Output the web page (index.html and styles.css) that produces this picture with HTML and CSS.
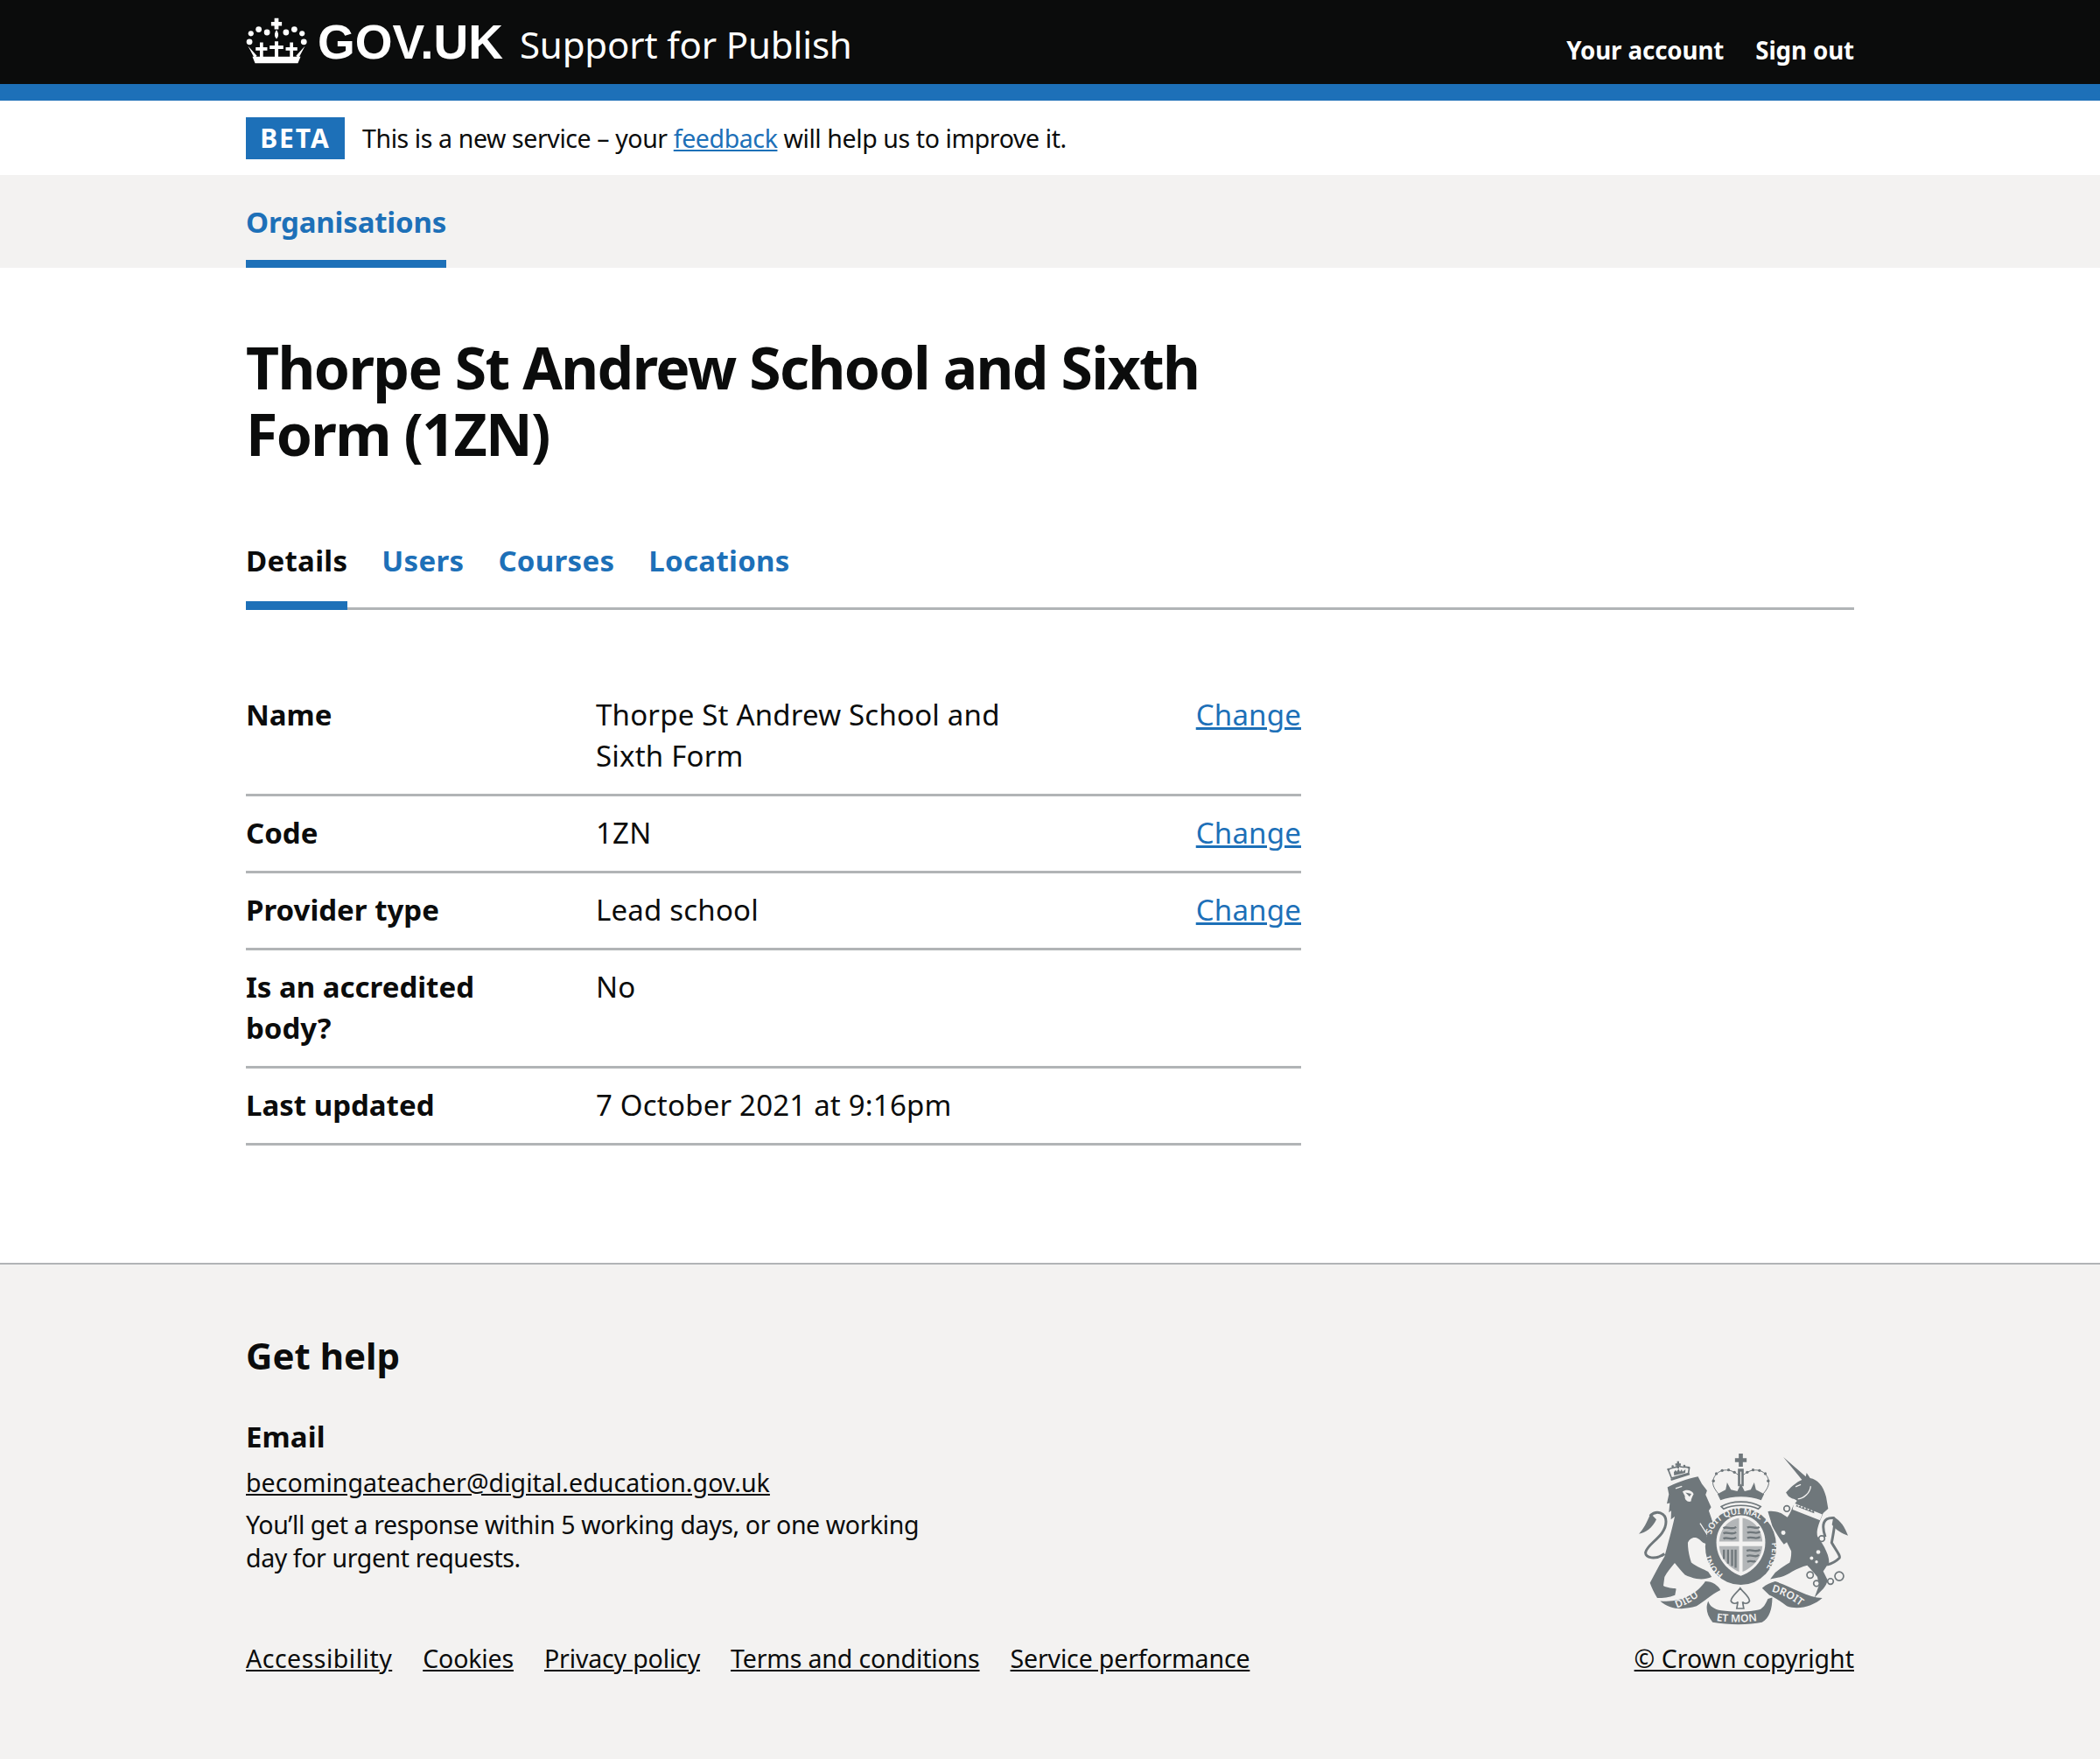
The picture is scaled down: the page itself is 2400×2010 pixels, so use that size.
FILE: index.html
```html
<!DOCTYPE html>
<html lang="en-GB">
<head>
    <meta charset="UTF-8">
    <title>Thorpe St Andrew School and Sixth Form (1ZN) - Support for Publish</title>
    <link rel="stylesheet" href="styles.css">
</head>
<body>
    <header class="site-header">
        <div class="wrapper header-inner">
            <a class="logo" href="#">
                <svg class="logo-crown" viewBox="34 28 204 156" aria-hidden="true">
                    <circle cx="45" cy="110" r="10"/><circle cx="50" cy="82" r="9"/><circle cx="76" cy="68" r="10"/><circle cx="104" cy="78" r="10"/>
                    <circle cx="168" cy="78" r="10"/><circle cx="196" cy="68" r="10"/><circle cx="222" cy="82" r="9"/><circle cx="228" cy="110" r="10"/>
                    <path d="M129 30h14v13h11v13h-11v12h-14v-12h-11v-13h11z"/>
                    <path d="M136 70c8 10 8 22 0 30c-8-8-8-20 0-30z"/>
                    <path d="M80 112h11v16h14v11h-14v24h-11v-24h-14v-11h14z"/>
                    <path d="M130 108h12v14h17v12h-17v30h-12v-30h-17v-12h17z"/>
                    <path d="M181 112h11v16h14v11h-14v24h-11v-24h-14v-11h14z"/>
                    <path d="M40 124l30 33-8 8zM232 124l-30 33 8 8z"/>
                    <path d="M55 160H217L208 182H64z"/>
                </svg>
                <span class="logo-text">GOV.UK</span>
                <span class="service-name">Support for Publish</span>
            </a>
            <nav class="header-nav">
                <a href="#">Your account</a>
                <a href="#">Sign out</a>
            </nav>
        </div>
    </header>
    <div class="header-stripe"></div>

    <div class="wrapper phase-banner">
        <strong class="phase-tag">BETA</strong>
        <span>This is a new service – your <a href="#">feedback</a> will help us to improve it.</span>
    </div>

    <nav class="primary-nav">
        <div class="wrapper">
            <a class="primary-link" href="#">Organisations</a>
        </div>
    </nav>

    <main class="wrapper main">
        <h1 class="title">Thorpe St Andrew School and Sixth Form (1ZN)</h1>

        <nav class="sub-nav">
            <a class="sub-link current" href="#">Details</a>
            <a class="sub-link" href="#">Users</a>
            <a class="sub-link" href="#">Courses</a>
            <a class="sub-link" href="#">Locations</a>
        </nav>

        <dl class="summary">
            <div class="summary-row">
                <dt>Name</dt>
                <dd>Thorpe St Andrew School and Sixth Form</dd>
                <dd class="summary-action"><a href="#">Change</a></dd>
            </div>
            <div class="summary-row">
                <dt>Code</dt>
                <dd>1ZN</dd>
                <dd class="summary-action"><a href="#">Change</a></dd>
            </div>
            <div class="summary-row">
                <dt>Provider type</dt>
                <dd>Lead school</dd>
                <dd class="summary-action"><a href="#">Change</a></dd>
            </div>
            <div class="summary-row">
                <dt>Is an accredited body?</dt>
                <dd>No</dd>
                <dd class="summary-action"></dd>
            </div>
            <div class="summary-row">
                <dt>Last updated</dt>
                <dd>7 October 2021 at 9:16pm</dd>
                <dd class="summary-action"></dd>
            </div>
        </dl>
    </main>

    <footer class="site-footer">
        <div class="wrapper footer-inner">
            <div class="footer-left">
                <h2 class="help-title">Get help</h2>
                <h3 class="help-sub">Email</h3>
                <p class="help-text"><a href="#">becomingateacher@digital.education.gov.uk</a></p>
                <p class="help-text help-note">You’ll get a response within 5 working days, or one working day for urgent requests.</p>
                <ul class="footer-links">
                    <li><a href="#">Accessibility</a></li>
                    <li><a href="#">Cookies</a></li>
                    <li><a href="#">Privacy policy</a></li>
                    <li><a href="#">Terms and conditions</a></li>
                    <li><a href="#">Service performance</a></li>
                </ul>
            </div>
            <div class="copyright">
                <svg class="crest" viewBox="100 60 725 595" aria-hidden="true">
                    <!-- lion -->
                    <path d="M200 182C220 170 270 152 305 145L318 170L336 193L331 207L350 250L342 262L355 300C347 328 338 340 335 352L358 385L322 372C315 365 308 358 300 355C285 352 275 360 270 372C270 395 275 420 282 440C300 455 325 462 340 472L352 490C335 498 315 498 300 496C285 492 272 488 260 482C248 470 235 455 225 442C212 458 198 475 190 490L186 520C200 528 218 528 230 530L226 552C205 560 185 562 165 562C155 545 145 525 140 510C150 490 162 470 172 450L190 420C200 380 215 330 225 282L212 292L213 262L205 268L208 236L198 238L205 206z"/>
                    <path class="line" d="M190 410C160 432 122 425 125 405C130 375 195 350 195 300C195 268 162 258 140 280"/>
                    <path d="M142 272C128 305 118 325 102 342C125 337 148 322 162 292z"/>
                    <path class="cut-line" d="M228 186L250 178M312 305L352 368"/>
                    <path class="spots-fill" d="M252 197C264 187 285 192 290 205C285 215 281 222 281 230C270 234 258 226 260 212z"/>
                    <path d="M262 200L282 204L276 214z"/>
                    <!-- lion crown -->
                    <path class="thin" d="M214 150L272 134L275 115C262 108 250 118 238 108C225 118 212 112 203 122z"/>
                    <path class="line-band" d="M212 156L276 136"/>
                    <g>
                        <circle cx="203" cy="120" r="4"/><circle cx="218" cy="110" r="4"/><circle cx="258" cy="108" r="4"/><circle cx="273" cy="114" r="4"/>
                    </g>
                    <path d="M233 92h7v8h6v7h-6v10h-7v-10h-6v-7h6z"/>
                    <path d="M222 130l6-8 4 6 6-10 5 10 6-8 3 8 10-8-1 12-38 9z"/>
                    <!-- unicorn -->
                    <path d="M598 78L675 145L678 132L690 150C715 155 735 175 745 215L752 255L735 270L726 292C715 320 712 335 715 350C725 365 738 382 745 400C752 415 755 428 755 440L735 470L750 500C748 512 742 522 735 530L705 560L720 520L715 490C705 478 692 462 680 450C662 455 645 462 630 470C615 480 602 486 590 490L553 497L570 475C585 462 603 450 620 440C624 428 626 412 625 400L610 370L600 378C585 358 570 335 560 315L545 265C560 262 575 266 590 270L612 285C620 275 625 262 632 245L645 228C635 220 625 222 615 212L607 200C620 185 640 165 662 156z"/>
                    <path class="line" d="M742 352C728 310 735 285 770 287C780 288 770 340 764 372C780 400 796 418 790 425C775 440 760 445 748 448"/>
                    <path d="M770 283C795 295 810 320 820 348C800 340 780 330 765 310z"/>
                    <path class="cut-line" d="M648 222C670 220 690 200 692 178M640 180L658 172"/>
                    <path class="spots-fill" d="M634 236L732 275L724 295L630 258z"/>
                    <path d="M640 248l6-8 3 9 8-6 3 10 8-6 3 10 9-6 2 10 9-6 3 10 9-5 1 11-62-24z"/>
                    <g class="rings">
                        <circle cx="690" cy="483" r="11"/><circle cx="712" cy="512" r="10"/><circle cx="760" cy="505" r="10"/><circle cx="790" cy="487" r="15"/>
                        <circle cx="730" cy="358" r="10"/><circle cx="610" cy="255" r="10"/><circle cx="598" cy="338" r="10"/>
                    </g>
                    <g class="spots">
                        <circle cx="718" cy="404" r="7"/><circle cx="695" cy="425" r="6"/><circle cx="712" cy="438" r="5"/>
                    </g>
                    <!-- royal crown -->
                    <path d="M445 66h14v16h13v13h-13v16h-14v-16h-13v-13h13z"/>
                    <path d="M442 118h20v60h-20z"/>
                    <path class="gap" d="M452 128V176"/>
                    <path class="line-thin" d="M444 140C410 110 365 120 356 160C354 180 368 195 378 208M460 140C494 110 540 120 548 160C550 180 536 195 526 208"/>
                    <g class="dots">
                        <circle cx="358" cy="160" r="5"/><circle cx="368" cy="135" r="5"/><circle cx="388" cy="124" r="5"/><circle cx="410" cy="122" r="5"/><circle cx="430" cy="130" r="5"/>
                        <circle cx="474" cy="130" r="5"/><circle cx="494" cy="122" r="5"/><circle cx="516" cy="124" r="5"/><circle cx="536" cy="135" r="5"/><circle cx="546" cy="160" r="5"/>
                    </g>
                    <path d="M372 205L400 190L405 165L418 190L440 195L452 170L465 195L486 190L498 165L504 190L532 205L522 226C480 210 425 210 382 226z"/>
                    <path class="thin" d="M385 248C420 226 485 226 520 248L512 256C480 240 425 240 393 256z"/>
                    <!-- garter and shield -->
                    <ellipse cx="452" cy="385" rx="122" ry="132"/>
                    <path class="shield" d="M368 370C368 318 408 278 452 278C496 278 536 318 536 370C536 432 492 472 452 486C412 472 368 432 368 370z"/>
                    <path class="quarter" d="M378 368C380 325 410 292 446 288V368z"/>
                    <path class="quarter" d="M458 288C494 292 524 325 526 368H458z"/>
                    <path class="quarter" d="M378 384H446V472C412 458 380 425 378 384z"/>
                    <path class="quarter" d="M458 384H526C524 425 492 458 458 472z"/>
                    <path class="heraldry" d="M392 322C405 314 420 330 436 318M392 340C405 332 420 348 436 336M392 358C405 350 420 366 436 354M474 320C488 312 504 328 516 318M474 338C488 330 504 346 518 334M474 356C488 348 504 364 518 352M472 400C488 392 504 408 518 396M472 418C488 410 504 426 514 414M474 438C488 430 496 442 502 434M394 396V428M408 396V444M422 396V452M434 396V458"/>
                    <defs>
                        <path id="garter-top" d="M350 345C375 250 530 250 555 345"/>
                        <path id="garter-left" d="M392 480C362 462 343 425 345 382"/>
                        <path id="garter-right" d="M558 372C564 415 547 462 514 488"/>
                        <path id="ribbon-left" d="M232 597C265 587 300 562 332 540"/>
                        <path id="ribbon-mid" d="M368 640C415 647 490 647 535 635"/>
                        <path id="ribbon-right" d="M557 540C600 550 640 575 672 602"/>
                    </defs>
                    <g class="crest-text">
                        <text font-size="30"><textPath href="#garter-top">SOIT QUI MAL Y</textPath></text>
                        <text font-size="30"><textPath href="#garter-left">HONI</textPath></text>
                        <text font-size="30"><textPath href="#garter-right">PENSE</textPath></text>
                    </g>
                    <!-- motto -->
                    <path d="M175 572C240 580 300 550 330 505C355 505 375 520 382 535C350 550 325 575 300 590C250 605 205 600 175 572z"/>
                    <path d="M340 572C345 590 360 600 385 605C430 612 490 610 520 600C535 590 540 575 545 565L560 560C560 600 550 630 525 645C480 655 410 655 355 645C335 620 330 595 340 572z"/>
                    <path d="M525 528C540 515 555 510 570 505C620 520 680 560 732 562C700 590 650 605 610 590C590 575 570 560 550 552z"/>
                    <path class="thin" d="M450 528C462 545 480 555 482 572C476 584 462 582 458 575L462 598H438L442 575C438 582 424 584 418 572C420 555 438 545 450 528z"/>
                    <g class="crest-text">
                        <text font-size="36"><textPath href="#ribbon-left">DIEU</textPath></text>
                        <text font-size="36"><textPath href="#ribbon-mid">ET MON</textPath></text>
                        <text font-size="36"><textPath href="#ribbon-right">DROIT</textPath></text>
                    </g>
                </svg>
                <a href="#">© Crown copyright</a>
            </div>
        </div>
    </footer>
</body>
</html>
```

FILE: styles.css
```css
* {
    box-sizing: border-box;
}
body {
    margin: 0;
    font-family: "Noto Sans", "Liberation Sans", sans-serif;
    font-size: 33px;
    line-height: 47px;
    letter-spacing: 0.2px;
    color: #0b0c0c;
    background-color: #fff;
}
a {
    color: #1d70b8;
}
.wrapper {
    width: 1838px;
    margin: 0 auto;
}

/* header */
.site-header {
    height: 96px;
    background-color: #0b0c0c;
}
.header-inner {
    display: flex;
    justify-content: space-between;
    height: 100%;
}
.logo {
    display: flex;
    align-items: center;
    height: 96px;
    color: #fff;
    text-decoration: none;
}
.logo-crown {
    width: 70px;
    height: 53px;
    margin-right: 12px;
    margin-bottom: 4px;
    fill: #fff;
}
.logo-text {
    font-family: "Liberation Sans", sans-serif;
    font-size: 55px;
    font-weight: 700;
    letter-spacing: 0;
    margin-right: 19px;
}
.service-name {
    font-size: 42px;
    font-weight: 400;
    letter-spacing: -0.15px;
    margin-top: 5px;
}
.header-nav {
    display: flex;
    gap: 36px;
    padding-top: 35px;
}
.header-nav a {
    color: #fff;
    font-size: 27.7px;
    font-weight: 700;
    line-height: 45px;
    letter-spacing: -0.1px;
    text-decoration: none;
}
.header-stripe {
    height: 19px;
    background-color: #1d70b8;
}

/* beta banner */
.phase-banner {
    display: flex;
    align-items: center;
    height: 85px;
    gap: 20px;
    font-size: 28.5px;
    line-height: 36px;
    letter-spacing: -0.4px;
}
.phase-tag {
    width: 113px;
    height: 48px;
    background-color: #1d70b8;
    color: #fff;
    font-size: 30px;
    line-height: 48px;
    letter-spacing: 2px;
    text-align: center;
}

/* grey nav */
.primary-nav {
    height: 106px;
    background-color: #f3f2f1;
}
.primary-link {
    display: inline-block;
    height: 106px;
    padding-top: 30px;
    border-bottom: 9px solid #1d70b8;
    font-weight: 700;
    letter-spacing: -0.2px;
    text-decoration: none;
}

/* main */
.main {
    height: 1137px;
    padding-top: 75px;
}
.title {
    width: 1206px;
    margin: 0;
    font-size: 66px;
    line-height: 76px;
    font-weight: 700;
    letter-spacing: -1.6px;
}
.sub-nav {
    display: flex;
    gap: 39px;
    height: 97px;
    margin-top: 67px;
    border-bottom: 3px solid #b1b4b6;
}
.sub-link {
    height: 97px;
    padding-top: 17px;
    font-weight: 700;
    letter-spacing: 0.3px;
    text-decoration: none;
}
.sub-link.current {
    color: #0b0c0c;
    border-bottom: 10px solid #1d70b8;
}
.summary {
    width: 1206px;
    margin: 78px 0 0;
}
.summary-row {
    display: flex;
    padding: 18px 0 20px;
    border-bottom: 3px solid #b1b4b6;
}
.summary-row dt {
    width: 400px;
    padding-right: 50px;
    font-weight: 700;
    letter-spacing: 0;
}
.summary-row dd {
    width: 540px;
    margin: 0;
    padding-right: 60px;
}
.summary-row .summary-action {
    flex: 1;
    padding-right: 0;
    text-align: right;
}

/* footer */
.site-footer {
    height: 570px;
    padding-top: 76px;
    background-color: #f3f2f1;
    border-top: 2px solid #b1b4b6;
}
.footer-inner {
    display: flex;
    justify-content: space-between;
}
.help-title {
    margin: 0;
    font-size: 42px;
    line-height: 56px;
    font-weight: 700;
    letter-spacing: 0;
}
.help-sub {
    margin: 41px 0 0;
    font-size: 33px;
    line-height: 47px;
    font-weight: 700;
    letter-spacing: 0.1px;
}
.help-text {
    width: 800px;
    margin: 10px 0 0;
    font-size: 28.5px;
    line-height: 38px;
    letter-spacing: -0.4px;
}
.help-text a {
    color: #0b0c0c;
    letter-spacing: 0.05px;
}
.help-note {
    margin-top: 10px;
}
.footer-links {
    display: flex;
    gap: 35px;
    margin: 77px 0 0;
    padding: 0;
    list-style: none;
    font-size: 28.5px;
    line-height: 38px;
    letter-spacing: -0.15px;
}
.footer-links li:first-child {
    letter-spacing: 0.5px;
}
.footer-links a,
.copyright a {
    color: #0b0c0c;
}
.copyright {
    display: flex;
    flex-direction: column;
    align-items: center;
    justify-content: flex-end;
    font-size: 28.5px;
    line-height: 38px;
    letter-spacing: 0;
}
.crest {
    display: block;
    width: 242px;
    height: 198px;
    margin-bottom: 19px;
    fill: #6f777b;
}
.crest .line {
    fill: none;
    stroke: #6f777b;
    stroke-width: 9;
}
.crest .line-thin {
    fill: none;
    stroke: #6f777b;
    stroke-width: 3;
}
.crest .line-band {
    fill: none;
    stroke: #6f777b;
    stroke-width: 6;
}
.crest .cut-line,
.crest .gap {
    fill: none;
    stroke: #f3f2f1;
    stroke-width: 4;
}
.crest .thin,
.crest .rings circle {
    fill: #f3f2f1;
    stroke: #6f777b;
    stroke-width: 5;
}
.crest .spots circle,
.crest .spots-fill,
.crest .shield {
    fill: #f3f2f1;
}
.crest .quarter {
    fill: #b3b6b8;
}
.crest .heraldry {
    fill: none;
    stroke: #6f777b;
    stroke-width: 7;
}
.crest-text text {
    fill: #f3f2f1;
    font-family: "Noto Sans", sans-serif;
    font-weight: 600;
}
```
